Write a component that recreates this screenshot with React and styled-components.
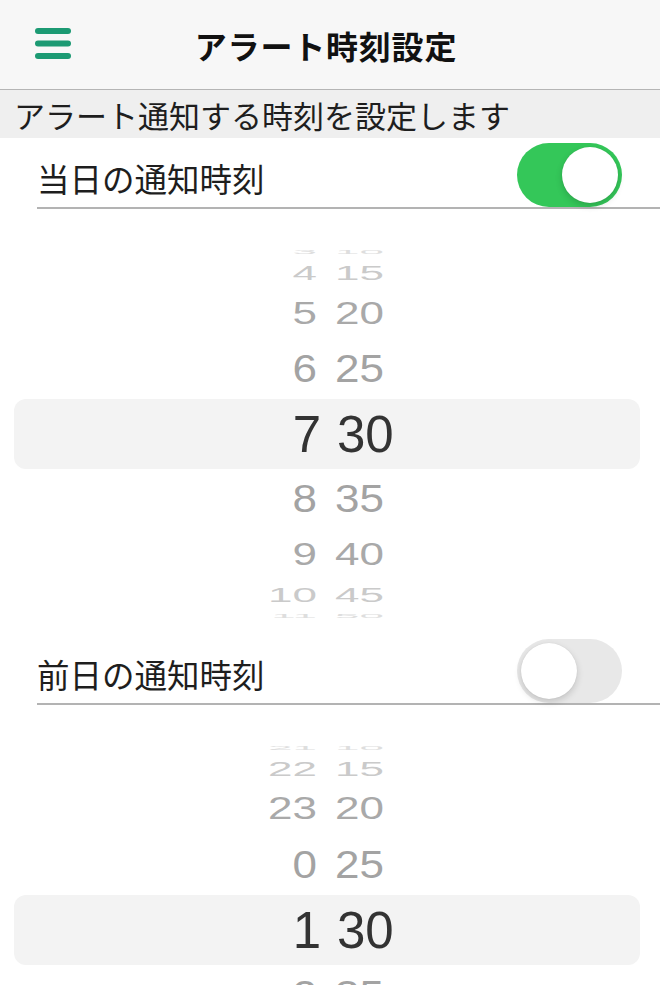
import React from "react";
import styled, { createGlobalStyle } from "styled-components";

const GlobalStyle = createGlobalStyle`
  body {
    margin: 0;
    background: #ffffff;
    font-family: "Noto Sans CJK JP", "Noto Sans", sans-serif;
    color: #222;
  }
`;

// wheel geometry, index = distance from the selected row
const OFFSETS = [0, 65, 121, 161, 182];
const SQUASH = [1, 0.89, 0.7, 0.46, 0.13];
const SHADES = ["#333333", "#a3a3a3", "#a9a9a9", "#cacaca", "#dedede"];

const hourList = (center) =>
  [-4, -3, -2, -1, 0, 1, 2, 3, 4].map((k) => (center + k + 24) % 24);
const minuteList = [10, 15, 20, 25, 30, 35, 40, 45, 50];

export default function App() {
  return (
    <Page>
      <GlobalStyle />
      <Header>
        <MenuButton aria-label="menu">
          <svg width="36" height="31" viewBox="0 0 36 31">
            <rect x="0" y="0" width="36" height="6" rx="3" fill="#1c9a73" />
            <rect x="0" y="12.5" width="36" height="6" rx="3" fill="#1c9a73" />
            <rect x="0" y="25" width="36" height="6" rx="3" fill="#1c9a73" />
          </svg>
        </MenuButton>
        <Title>アラート時刻設定</Title>
        <span />
      </Header>

      <SubHeader>アラート通知する時刻を設定します</SubHeader>

      <SettingRow>
        <Label>当日の通知時刻</Label>
        <Toggle $on>
          <Knob />
        </Toggle>
      </SettingRow>
      <TimeWheel hours={hourList(7)} minutes={minuteList} />

      <SettingRow>
        <Label>前日の通知時刻</Label>
        <Toggle>
          <Knob />
        </Toggle>
      </SettingRow>
      <TimeWheel hours={hourList(1)} minutes={minuteList} />
    </Page>
  );
}

function TimeWheel({ hours, minutes }) {
  return (
    <Wheel>
      <Band />
      {hours.map((h, i) => {
        const k = i - 4;
        const d = Math.abs(k);
        const y = Math.sign(k) * OFFSETS[d];
        return (
          <WheelRow
            key={i}
            $selected={d === 0}
            style={{
              color: SHADES[d],
              transform: `translateY(${y}px) scaleY(${SQUASH[d]})`,
            }}
          >
            <HourCell>{h}</HourCell>
            <MinuteCell>{minutes[i]}</MinuteCell>
          </WheelRow>
        );
      })}
    </Wheel>
  );
}

const Page = styled.div`
  width: 660px;
  overflow: hidden;
`;

const Header = styled.header`
  height: 89px;
  background: #f7f7f7;
  border-bottom: 1px solid #b5b5b5;
  display: grid;
  grid-template-columns: 1fr auto 1fr;
  align-items: center;
`;

const MenuButton = styled.div`
  padding-left: 35px;
  padding-bottom: 3px;
  display: flex;
  align-items: center;
`;

const Title = styled.h1`
  margin: 0;
  font-size: 32px;
  font-weight: 700;
  color: #111;
  line-height: 1;
  letter-spacing: 0.8px;
  transform: translateX(-4px);
`;

const SubHeader = styled.div`
  height: 48px;
  background: #efefef;
  font-size: 31px;
  line-height: 48px;
  padding-left: 14px;
  padding-top: 1px;
  box-sizing: border-box;
  color: #1e1e1e;
  white-space: nowrap;
`;

const SettingRow = styled.div`
  margin-left: 37px;
  padding: 5px 38px 0 0;
  display: flex;
  justify-content: space-between;
  align-items: center;
  border-bottom: 2px solid #b3b3b3;
`;

const Label = styled.span`
  font-size: 32.5px;
  line-height: 1;
  margin-top: 6px;
  color: #1e1e1e;
`;

const Toggle = styled.div`
  width: 105px;
  height: 64px;
  border-radius: 32px;
  background: ${(p) => (p.$on ? "#34c759" : "#e8e8e8")};
  display: flex;
  align-items: center;
  justify-content: ${(p) => (p.$on ? "flex-end" : "flex-start")};
  padding: 0 4px;
  box-sizing: border-box;
`;

const Knob = styled.div`
  width: 56px;
  height: 56px;
  border-radius: 50%;
  background: #ffffff;
  box-shadow: 0 3px 7px rgba(0, 0, 0, 0.16), 0 0 1px rgba(0, 0, 0, 0.12);
`;

const Wheel = styled.div`
  margin-top: 25px;
  height: 400px;
  display: grid;
  align-items: center;
  overflow: hidden;
  font-family: "Liberation Sans", Arial, sans-serif;
  & > * {
    grid-area: 1 / 1;
  }
`;

const Band = styled.div`
  height: 70px;
  margin: 0 20px 0 14px;
  border-radius: 12px;
  background: #f3f3f3;
`;

const WheelRow = styled.div`
  display: grid;
  grid-template-columns: 1fr 1fr;
  column-gap: ${(p) => (p.$selected ? "16px" : "18px")};
  padding-right: ${(p) => (p.$selected ? "2px" : "8px")};
  font-size: ${(p) => (p.$selected ? "51px" : "44px")};
  line-height: 1;
`;

const HourCell = styled.span`
  text-align: right;
`;

const MinuteCell = styled.span`
  text-align: left;
`;
